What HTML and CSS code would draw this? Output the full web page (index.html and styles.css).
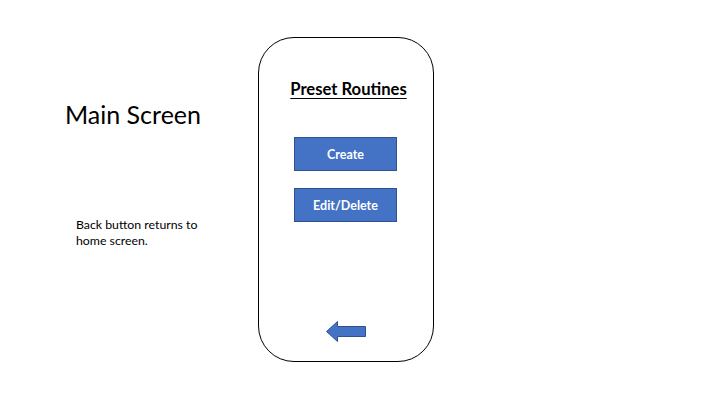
FILE: index.html
```html
<!DOCTYPE html>
<html>
<head>
<meta charset="utf-8">
<link rel="stylesheet" href="styles.css">
</head>
<body>
<div class="slide">
  <div class="notes">
    <h1 class="heading">Main Screen</h1>
    <p class="note">Back button returns to<br>home screen.</p>
  </div>
  <div class="phone">
    <h2 class="title">Preset Routines</h2>
    <div class="btn">Create</div>
    <div class="btn">Edit/Delete</div>
    <div class="spacer"></div>
    <svg class="back" width="41" height="21" viewBox="0 0 41 21">
      <path d="M0.5 10.5 L11.5 0.5 L11.5 5.5 L39.5 5.5 L39.5 15.5 L11.5 15.5 L11.5 20.5 Z" fill="#4472C4" stroke="#2F528F" stroke-width="1"/>
    </svg>
  </div>
</div>
</body>
</html>
```
FILE: styles.css
```css
html, body {
  margin: 0;
  padding: 0;
  background: #fff;
}
.slide {
  width: 720px;
  height: 405px;
  display: flex;
  font-family: Lato, "Open Sans", sans-serif;
  color: #000;
}
.notes {
  margin-left: 65px;
  width: 193px;
  padding-top: 99px;
}
.heading {
  margin: 0;
  font-weight: normal;
  font-size: 25px;
  line-height: 30px;
}
.note {
  margin: 88px 0 0 11px;
  font-size: 12.3px;
  line-height: 16px;
}
.phone {
  margin-top: 37px;
  width: 174px;
  height: 323px;
  border: 1px solid #000;
  border-radius: 36px;
  display: flex;
  flex-direction: column;
  align-items: center;
}
.title {
  margin: 40px 0 0 5px;
  font-size: 16.6px;
  line-height: 22px;
  font-weight: bold;
  text-decoration: underline;
  text-underline-offset: 3px;
}
.btn {
  box-sizing: border-box;
  width: 103px;
  height: 34px;
  background: #4472C4;
  border: 1px solid #2F528F;
  color: #fff;
  font-size: 12.5px;
  font-weight: bold;
  display: flex;
  align-items: center;
  justify-content: center;
  margin-top: 17px;
  margin-right: 1px;
}
.title + .btn {
  margin-top: 37px;
}
.spacer {
  flex: 1;
}
.back {
  margin-bottom: 19px;
  margin-left: 0;
  display: block;
}
```
